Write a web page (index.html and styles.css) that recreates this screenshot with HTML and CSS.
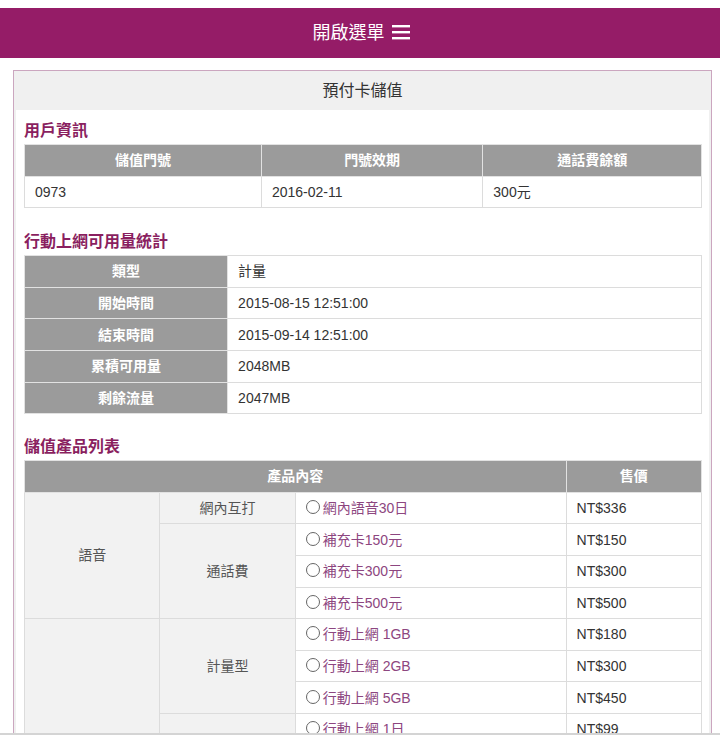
FILE: index.html
```html
<!DOCTYPE html>
<html>
<head>
    <meta charset="utf-8">
    <title>預付卡儲值</title>
    <link rel="stylesheet" href="styles.css">
</head>
<body>

    <div class="topbar">
        <a class="menu-toggle" href="#">開啟選單
            <svg class="menu-icon" width="18" height="16" viewBox="0 0 18 16">
                <rect x="0" y="1" width="18" height="2.4" fill="#fff"/>
                <rect x="0" y="7" width="18" height="2.4" fill="#fff"/>
                <rect x="0" y="13" width="18" height="2.4" fill="#fff"/>
            </svg>
        </a>
    </div>

    <div class="panel">
        <div class="panel-title">預付卡儲值</div>
        <div class="panel-body">

            <!-- 用戶資訊 -->
            <h3 class="section-title">用戶資訊</h3>
            <table class="grid">
                <colgroup>
                    <col class="w35"><col class="w33"><col>
                </colgroup>
                <tr>
                    <th>儲值門號</th>
                    <th>門號效期</th>
                    <th>通話費餘額</th>
                </tr>
                <tr>
                    <td>0973</td>
                    <td>2016-02-11</td>
                    <td>300元</td>
                </tr>
            </table>

            <!-- 上網用量 -->
            <h3 class="section-title">行動上網可用量統計</h3>
            <table class="grid">
                <colgroup>
                    <col class="w30"><col>
                </colgroup>
                <tr><th>類型</th><td>計量</td></tr>
                <tr><th>開始時間</th><td>2015-08-15 12:51:00</td></tr>
                <tr><th>結束時間</th><td>2015-09-14 12:51:00</td></tr>
                <tr><th>累積可用量</th><td>2048MB</td></tr>
                <tr><th>剩餘流量</th><td>2047MB</td></tr>
            </table>

            <!-- 產品列表 -->
            <h3 class="section-title section-title-tight">儲值產品列表</h3>
            <table class="grid grid-product">
                <colgroup>
                    <col class="w20"><col class="w20"><col><col class="w20">
                </colgroup>
                <tr>
                    <th colspan="3">產品內容</th>
                    <th>售價</th>
                </tr>
                <tr>
                    <td class="cat" rowspan="4">語音</td>
                    <td class="cat">網內互打</td>
                    <td class="item"><label><span class="radio"></span>網內語音30日</label></td>
                    <td>NT$336</td>
                </tr>
                <tr>
                    <td class="cat" rowspan="3">通話費</td>
                    <td class="item"><label><span class="radio"></span>補充卡150元</label></td>
                    <td>NT$150</td>
                </tr>
                <tr>
                    <td class="item"><label><span class="radio"></span>補充卡300元</label></td>
                    <td>NT$300</td>
                </tr>
                <tr>
                    <td class="item"><label><span class="radio"></span>補充卡500元</label></td>
                    <td>NT$500</td>
                </tr>
                <tr>
                    <td class="cat" rowspan="9">上網</td>
                    <td class="cat" rowspan="3">計量型</td>
                    <td class="item"><label><span class="radio"></span>行動上網 1GB</label></td>
                    <td>NT$180</td>
                </tr>
                <tr>
                    <td class="item"><label><span class="radio"></span>行動上網 2GB</label></td>
                    <td>NT$300</td>
                </tr>
                <tr>
                    <td class="item"><label><span class="radio"></span>行動上網 5GB</label></td>
                    <td>NT$450</td>
                </tr>
                <tr>
                    <td class="cat" rowspan="6">計日型</td>
                    <td class="item"><label><span class="radio"></span>行動上網 1日</label></td>
                    <td>NT$99</td>
                </tr>
                <tr>
                    <td class="item"><label><span class="radio"></span>行動上網 3日</label></td>
                    <td>NT$249</td>
                </tr>
                <tr>
                    <td class="item"><label><span class="radio"></span>行動上網 5日</label></td>
                    <td>NT$299</td>
                </tr>
                <tr>
                    <td class="item"><label><span class="radio"></span>行動上網 7日</label></td>
                    <td>NT$349</td>
                </tr>
                <tr>
                    <td class="item"><label><span class="radio"></span>行動上網 15日</label></td>
                    <td>NT$499</td>
                </tr>
                <tr>
                    <td class="item"><label><span class="radio"></span>行動上網 30日</label></td>
                    <td>NT$699</td>
                </tr>
            </table>

        </div>
    </div>

    <div class="window-edge"></div>

</body>
</html>
```

FILE: styles.css
```css
body {
    margin: 0;
    padding: 8px 0 0;
    background: #fff;
    font-family: "Liberation Sans", "Noto Sans CJK TC", sans-serif;
    font-size: 14px;
    color: #333;
}

.topbar {
    height: 50px;
    line-height: 50px;
    background: #951c67;
    text-align: center;
}

.menu-toggle {
    color: #fff;
    font-size: 18px;
    text-decoration: none;
    padding-left: 2px;
}

.menu-icon {
    vertical-align: -1px;
    margin-left: 2px;
}

.panel {
    margin: 12px 8px 0 13px;
    border: 1px solid #cba6bf;
    border-bottom: none;
    background: #f0f0f0;
    padding: 0 2px;
}

.panel-title {
    height: 39px;
    line-height: 39px;
    text-align: center;
    font-size: 16px;
    color: #333;
}

.panel-body {
    background: #fff;
    padding: 10px 7px 30px 8px;
}

.section-title {
    margin: 0 0 2px;
    font-size: 16px;
    line-height: 22px;
    font-weight: bold;
    color: #8a1f60;
}

.grid + .section-title {
    margin-top: 23px;
}

.grid + .section-title-tight {
    margin-top: 22px;
}

.grid {
    width: 100%;
    border-collapse: collapse;
    table-layout: fixed;
}

.grid tr {
    height: 31.6px;
}

.grid th,
.grid td {
    border: 1px solid #dcdcdc;
    padding: 0 10px;
    line-height: 20px;
    font-weight: normal;
    text-align: left;
    vertical-align: middle;
}

.grid th {
    background: #9b9b9b;
    color: #fff;
    font-weight: bold;
    text-align: center;
    border-color: #e2e2e2;
}

.w35 { width: 35%; }
.w33 { width: 32.7%; }
.w30 { width: 30%; }
.w20 { width: 20%; }

.grid-product .cat {
    background: #f2f2f2;
    color: #555;
    text-align: center;
}

.grid-product .item {
    color: #8d4680;
}

.radio {
    display: inline-block;
    width: 12px;
    height: 12px;
    border: 1px solid #666;
    border-radius: 50%;
    vertical-align: -1px;
    margin-right: 3px;
}

.window-edge {
    position: fixed;
    left: 0;
    right: 0;
    bottom: 0;
    height: 2px;
    background: #d4d4d4;
}
```
